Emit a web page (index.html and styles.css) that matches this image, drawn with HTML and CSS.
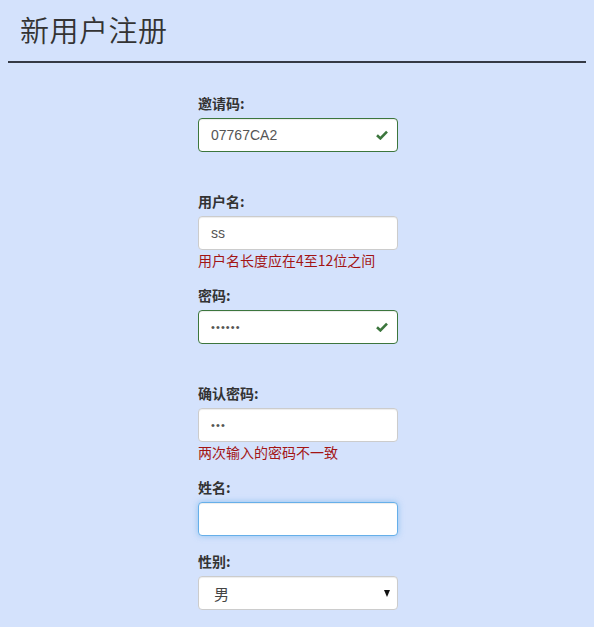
FILE: index.html
```html
<!DOCTYPE html>
<html lang="zh-CN">
<head>
<meta charset="utf-8">
<title>新用户注册</title>
<link rel="stylesheet" href="styles.css">
</head>
<body>
<header class="page-header">
  <h1 class="title">新用户注册</h1>
</header>
<hr class="rule">
<form class="reg-form">
  <div class="group">
    <label class="label">邀请码:</label>
    <div class="field">
      <input class="control ok" type="text" value="07767CA2">
      <svg class="check" viewBox="0 0 12 10" width="12" height="10"><path d="M1 5.2 L4.4 8.4 L11 1.6" fill="none" stroke="#3c763d" stroke-width="2.6"/></svg>
    </div>
    <div class="spacer"></div>
  </div>
  <div class="group">
    <label class="label">用户名:</label>
    <div class="field">
      <input class="control" type="text" value="ss">
    </div>
    <div class="msg">用户名长度应在4至12位之间</div>
  </div>
  <div class="group">
    <label class="label">密码:</label>
    <div class="field">
      <input class="control ok pass" type="password" value="123456">
      <svg class="check" viewBox="0 0 12 10" width="12" height="10"><path d="M1 5.2 L4.4 8.4 L11 1.6" fill="none" stroke="#3c763d" stroke-width="2.6"/></svg>
    </div>
    <div class="spacer"></div>
  </div>
  <div class="group">
    <label class="label">确认密码:</label>
    <div class="field">
      <input class="control pass" type="password" value="123">
    </div>
    <div class="msg">两次输入的密码不一致</div>
  </div>
  <div class="group">
    <label class="label">姓名:</label>
    <div class="field">
      <input class="control focus" type="text" value="">
    </div>
  </div>
  <div class="group">
    <label class="label">性别:</label>
    <div class="field">
      <select class="control select">
        <option>男</option>
        <option>女</option>
      </select>
      <span class="caret"></span>
    </div>
  </div>
</form>
</body>
</html>
```
FILE: styles.css
```css
html, body {
  background: #d4e2fc;
}
body {
  margin: 8px;
  font-family: "Liberation Sans", "Noto Sans CJK SC", sans-serif;
  font-size: 14px;
  color: #333;
}
.page-header {
  padding: 3px 12px 0;
}
.title {
  margin: 0;
  font-family: "Noto Sans CJK SC", sans-serif;
  font-weight: 350;
  font-size: 29px;
  line-height: 36px;
  color: #333;
  letter-spacing: 0.5px;
}
.rule {
  margin: 14px 0 0;
  border: 0;
  border-top: 2px solid #353a45;
  height: 0;
}
.reg-form {
  width: 200px;
  margin: 30px 0 0 190px;
}
.group {
  display: flex;
  flex-direction: column;
  margin-bottom: 15px;
}
.label {
  display: block;
  font-family: "Noto Sans CJK SC", sans-serif;
  font-weight: 700;
  font-size: 14px;
  line-height: 20px;
  height: 20px;
  margin-bottom: 5px;
  color: #333;
}
.field {
  position: relative;
  height: 34px;
}
.control {
  display: block;
  box-sizing: border-box;
  width: 200px;
  height: 34px;
  margin: 0;
  padding: 6px 12px;
  font-family: "Liberation Sans", "Noto Sans CJK SC", sans-serif;
  font-size: 14px;
  color: #555;
  background: #fff;
  border: 1px solid #ccc;
  border-radius: 4px;
  box-shadow: inset 0 1px 1px rgba(0,0,0,.075);
  outline: none;
}
.control.pass {
  font-size: 11px;
  letter-spacing: 1.1px;
}
.control.ok {
  border-color: #3c763d;
  padding-right: 34px;
}
.control.focus {
  border-color: #66afe9;
  box-shadow: inset 0 1px 1px rgba(0,0,0,.075), 0 0 6px rgba(102,175,233,.6);
}
.check {
  position: absolute;
  right: 10px;
  top: 12px;
}
.spacer {
  height: 24px;
}
.msg {
  font-family: "Noto Sans CJK SC", sans-serif;
  font-size: 14px;
  line-height: 20px;
  height: 20px;
  color: #a31515;
  white-space: nowrap;
}
.select {
  appearance: none;
  -webkit-appearance: none;
  padding-left: 15px;
  font-family: "Noto Sans CJK SC", sans-serif;
  font-size: 15px;
  color: #444;
}
.caret {
  position: absolute;
  right: 8px;
  top: 14px;
  width: 0;
  height: 0;
  border-left: 3.5px solid transparent;
  border-right: 3.5px solid transparent;
  border-top: 7px solid #111;
  pointer-events: none;
}
```
